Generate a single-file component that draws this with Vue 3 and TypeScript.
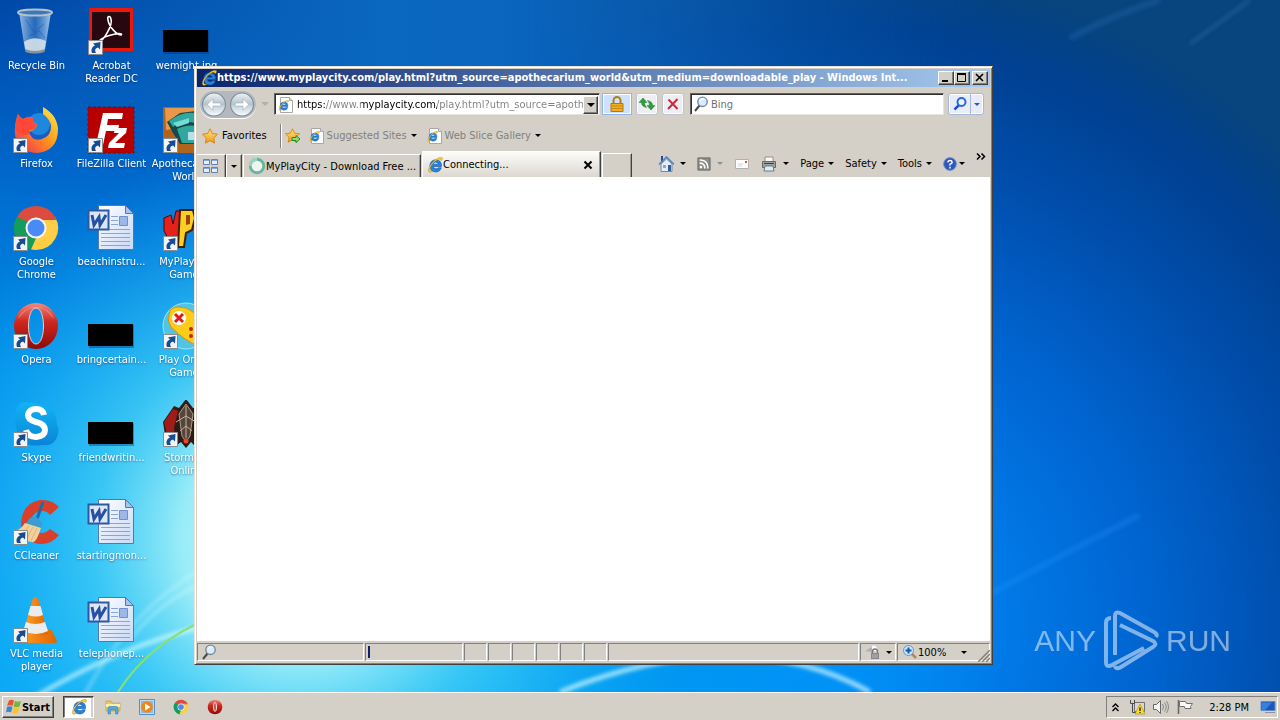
<script setup lang="ts">
import { ref } from 'vue'

interface Shortcut {
  label: string
  icon: string
  link: boolean
}

const shortcuts: Shortcut[] = [
  { label: 'Recycle Bin', icon: 'bin', link: false },
  { label: 'Firefox', icon: 'firefox', link: true },
  { label: 'Google Chrome', icon: 'chrome', link: true },
  { label: 'Opera', icon: 'opera', link: true },
  { label: 'Skype', icon: 'skype', link: true },
  { label: 'CCleaner', icon: 'ccleaner', link: true },
  { label: 'VLC media player', icon: 'vlc', link: true },
  { label: 'Acrobat Reader DC', icon: 'acrobat', link: true },
  { label: 'FileZilla Client', icon: 'filezilla', link: true },
  { label: 'beachinstru...', icon: 'word', link: false },
  { label: 'bringcertain...', icon: 'thumb', link: false },
  { label: 'friendwritin...', icon: 'thumb', link: false },
  { label: 'startingmon...', icon: 'word', link: false },
  { label: 'telephonep...', icon: 'word', link: false },
  { label: 'wemight.jpg', icon: 'thumb', link: false },
  { label: 'Apothecarium World', icon: 'apoth', link: true },
  { label: 'MyPlayCity Games', icon: 'mpc', link: true },
  { label: 'Play Online Games', icon: 'pad', link: true },
  { label: 'Stormfall Online', icon: 'storm', link: true },
]

const address = ref('https://www.myplaycity.com/play.html?utm_source=apoth')
const query = ref('')
const menus = ['Page', 'Safety', 'Tools']
const quick = [
  { name: 'Windows Explorer', icon: 'folder' },
  { name: 'Media Player', icon: 'wmp' },
  { name: 'Chrome', icon: 'chrome' },
  { name: 'Opera', icon: 'operaflat' },
]
</script>

<template>
  <svg class="defs" aria-hidden="true">
    <defs>
      <linearGradient id="gRed" x1="0" y1="0" x2="0" y2="1"><stop offset="0" stop-color="#f08a80" /><stop offset=".4" stop-color="#d0281e" /><stop offset="1" stop-color="#8c0a08" /></linearGradient>
      <linearGradient id="gGlass" x1="0" y1="0" x2="1" y2="0"><stop offset="0" stop-color="#b8d4f0" stop-opacity=".8" /><stop offset=".5" stop-color="#4a88cc" stop-opacity=".5" /><stop offset="1" stop-color="#c0dcf4" stop-opacity=".85" /></linearGradient>
      <linearGradient id="gFox" x1="1" y1="0" x2="0" y2="1"><stop offset="0" stop-color="#fff04a" /><stop offset=".45" stop-color="#ff9a1c" /><stop offset="1" stop-color="#f0205a" /></linearGradient>
      <linearGradient id="gPage" x1="0" y1="0" x2="1" y2="1"><stop offset="0" stop-color="#fff" /><stop offset="1" stop-color="#c8d8f6" /></linearGradient>
      <linearGradient id="gSky" x1="0" y1="0" x2="0" y2="1"><stop offset="0" stop-color="#12b4f4" /><stop offset="1" stop-color="#0884d8" /></linearGradient>
      <linearGradient id="gCone" x1="0" y1="0" x2="1" y2="0"><stop offset="0" stop-color="#ffa428" /><stop offset="1" stop-color="#e06400" /></linearGradient>
      <linearGradient id="gBall" x1="0" y1="0" x2="0" y2="1"><stop offset="0" stop-color="#eef2f4" /><stop offset=".5" stop-color="#b4c2cc" /><stop offset=".55" stop-color="#c4d2da" /><stop offset="1" stop-color="#f8fcfe" /></linearGradient>
      <linearGradient id="gGold" x1="0" y1="0" x2="0" y2="1"><stop offset="0" stop-color="#ffe680" /><stop offset="1" stop-color="#f09a10" /></linearGradient>
    </defs>
    <symbol id="i-arrow" viewBox="0 0 15 15">
      <path d="M.5.5h14v14H.5z" fill="#f4f4f4" stroke="#8c8c8c" />
      <path d="M4 13C2.500 9 4.500 6.500 7 5.500L5 3.500 12.500 2 12 9.500 10 7.500C7 8.500 6.500 10 8 13z" fill="#164c94" />
    </symbol>
    <symbol id="i-bin" viewBox="0 0 48 48">
      <path d="M7 4l6 38q11 4 20 0l6-38z" fill="url(#gGlass)" />
      <path d="M12 34q10-7 22-1l-1.500 9q-9 4-19 0z" fill="#dde6ea" opacity=".85" />
      <path d="M14 12l8 12 10-8M17 28l10-5 6 7" fill="none" stroke="#1c5ab0" opacity=".6" />
      <path d="M13 41q10 4 20 0l-.5 3q-10 3-19 0z" fill="#8c9298" />
      <ellipse cx="23" cy="4.500" rx="17" ry="3" fill="#3c78bc" stroke="#b8c0c8" stroke-width="2" />
    </symbol>
    <symbol id="i-firefox" viewBox="0 0 48 48">
      <circle cx="24" cy="25" r="17" fill="#1c5cc0" /><circle cx="27" cy="18" r="11" fill="#2088dc" />
      <path d="M31 1Q45 9 46 23 46 45 25 47 5 46 3 29 2 18 6 8q2 4 5 5 5-3 10-1-1 5 4 6-1 6-8 8 3 10 13 7 9-3 9-12 0-7-8-13 0-4 0-6z" fill="url(#gFox)" />
      <path d="M3 22Q4 14 6 8q2 4 5 5 5-3 10-1-1 5 4 6-1 6-8 6 2 5-4 5Q6 29 3 22z" fill="#ff4838" />
    </symbol>
    <symbol id="i-chrome" viewBox="0 0 48 48">
      <path d="M24 24L4.900 13A22 22 0 0 1 43.100 13z" fill="#db4c3e" />
      <path d="M24 13h19.100A22 22 0 0 1 24 46z" fill="#ffce44" />
      <path d="M24 24v22A22 22 0 0 1 4.900 13z" fill="#159c5a" />
      <path d="M24 13h19.100q1 1.500 1.500 3H26z" fill="#db4c3e" /><path d="M4.900 13l10 16 4-10z" fill="#159c5a" /><path d="M24 46l9.500-16.500L25 32 19 45.500z" fill="#ffce44" />
      <circle cx="24" cy="24" r="10.500" fill="#f4f4f4" /><circle cx="24" cy="24" r="8.500" fill="#4a8af4" />
    </symbol>
    <symbol id="i-opera" viewBox="0 0 48 48">
      <path fill-rule="evenodd" d="M24 1a22 23 0 0 1 0 46 22 23 0 0 1 0-46zm0 5c-10 0-10 36 0 36s10-36 0-36z" fill="url(#gRed)" />
      <path d="M24 6c-10 0-10 36 0 36s10-36 0-36z" fill="none" stroke="#f4c8c0" stroke-width="1" />
      <path d="M6 17C10 2 38 2 42 17 34 8 32 5 24 5S14 8 6 17z" fill="#fff" opacity=".25" />
    </symbol>
    <symbol id="i-operaflat" viewBox="0 0 48 48">
      <circle cx="24" cy="24" r="22" fill="url(#gRed)" /><ellipse cx="24" cy="24" rx="6" ry="14" fill="#f0dcd8" /><ellipse cx="24" cy="24" rx="2" ry="12" fill="#b01010" />
    </symbol>
    <symbol id="i-skype" viewBox="0 0 48 48">
      <path d="M3 14Q4 2 16 2q5 0 8 2 20 0 21 21 3 5 0 12-4 10-15 8-24 4-26-19-2-5-1-12z" fill="url(#gSky)" />
      <path d="M32 15Q31 9 24 9t-8 6q0 5 8 7 9 2 9 8 0 6-9 7-8 0-10-7" fill="none" stroke="#fff" stroke-width="6" />
    </symbol>
    <symbol id="i-ccleaner" viewBox="0 0 48 48">
      <path d="M47 9L38 17Q34 12 27 13 18 17 19 26q2 9 11 9 4 0 8-4l9 6Q39 47 27 46 9 43 9 24 11 5 28 2 40 1 47 9z" fill="#d8402c" />
      <path d="M31 4L25 21" stroke="#1c6ca8" stroke-width="3" />
      <path d="M15 24q3-6 9-5 5 2 6 8l-2 3-15-4z" fill="#3c9cd0" />
      <path d="M13 25l16 5Q24 46 20 44 6 43 1 33q8-1 12-8z" fill="#f0d09c" />
      <path d="M17 28L9 38M21 29l-7 13M25 30l-6 13" stroke="#dcb478" />
    </symbol>
    <symbol id="i-vlc" viewBox="0 0 48 48">
      <path d="M9 33h30l6 12-1 2H5l-1-2z" fill="url(#gCone)" />
      <path d="M21 2q3-2 5 0l10 36q-12 6-25 0z" fill="url(#gCone)" />
      <path d="M18.500 10h10l2.500 9q-7 3-15 0zM14 26q9 4 19 0l3 9q-12 6-25 0z" fill="#ececec" />
    </symbol>
    <symbol id="i-acrobat" viewBox="0 0 48 48">
      <path d="M2 0h44v43H2z" fill="#e8180c" /><path d="M5 4h38v36H5z" fill="#280810" />
      <path d="M12 33c4 1 14-16 12-22-1-4-4-3-3 1 1 7 9 15 13 15 4-3-15-1-22 6z" fill="none" stroke="#fff" stroke-width="1.600" />
    </symbol>
    <symbol id="i-filezilla" viewBox="0 0 48 48">
      <path d="M1 1h46v46H1z" fill="#b80000" /><path d="M1 1h46v46H1z" fill="none" stroke="#780818" stroke-dasharray="3 2" />
      <path d="M16 7h20l-1 6H21l-1 6h12l-1 6H19l-3 14H9zM28 22h12l-1 5-11 10h10l-1 5H21l1-5 10-10h-5z" fill="#fff" />
    </symbol>
    <symbol id="i-word" viewBox="0 0 48 48">
      <path d="M11.500 1.500h27l8 8v36h-35z" fill="url(#gPage)" stroke="#5078b4" /><path d="M38.500 1.500v8h8z" fill="#a8c4ec" stroke="#5078b4" />
      <path d="M24 12.500h7M24 16.500h7M24 20.500h7M14 25.500h29M14 29.500h29M14 33.500h29M14 37.500h29M14 41.500h29" stroke="#88a4d8" />
      <path d="M32.500 12.500h8v9h-8z" fill="#9cb8e8" stroke="#7090cc" />
      <path d="M1.500 6.500h20v19h-20z" fill="#dce8fa" stroke="#2c58a8" stroke-width="2" />
      <path d="M5 11l2 10 5-8 1 8 6-10" fill="none" stroke="#2850a0" stroke-width="3" />
    </symbol>
    <symbol id="i-thumb" viewBox="0 0 48 48"><path d="M2 23h45v23H2z" fill="#02306c" opacity=".4" /><path d="M1 22h45v22H1z" /></symbol>
    <symbol id="i-apoth" viewBox="0 0 48 48">
      <path d="M1 1h46v46H1z" fill="#b0641c" /><path d="M3 2h42v10L28 20 4 24z" fill="#e89848" />
      <path d="M5 16l13-9 16-2 8 8v25H18L11 27z" fill="#184848" /><path d="M7 15q13-10 26-8v10Q20 14 11 21zM15 23q11-6 26-2v16H20z" fill="#30a8a0" />
      <path d="M11 17l16-5v5l-12 4z" fill="#74dcd0" /><path d="M26 26h10v8H26z" fill="#b8e0e8" />
    </symbol>
    <symbol id="i-mpc" viewBox="0 0 48 48">
      <path d="M2 14l7-3 2 9 3-13h7l-4 25-7 9-8-14z" fill="#e8201c" stroke="#480808" />
      <path d="M18 6h13l2 8-3 12-6 3-2 14h-6z" fill="#fcd020" stroke="#402008" stroke-width="2" /><path d="M24 11h4v9l-4 1z" fill="#a04010" />
      <path d="M34 8h13v30H34z" fill="#f0b820" />
    </symbol>
    <symbol id="i-pad" viewBox="0 0 48 48">
      <circle cx="24" cy="24" r="23" fill="#50c4e4" stroke="#98e8f4" />
      <path d="M7 13Q8 4 17 5q8 0 14 5l14 17-8 17Q24 40 9 25 5 19 7 13z" fill="#fccc18" stroke="#e08c10" />
      <circle cx="17" cy="16" r="7" fill="#fff" /><path d="M13 12l8 8m0-8l-8 8" stroke="#d82018" stroke-width="3" /><circle cx="29" cy="27" r="2" fill="#c02810" /><circle cx="29" cy="34" r="2" fill="#c02810" />
    </symbol>
    <symbol id="i-storm" viewBox="0 0 48 48">
      <path d="M1 22L12 6l5 2 7-9 7 9 12-1v30l-7 2-4 6-3-3-5 6-5-6-4 3-4-6-8-4z" fill="#2c1c18" /><path d="M2 22l9-13 5 2-4 17 1 10-8-4z" fill="#a01c18" />
      <path d="M17 14l7-10 7 10-3 22-4 6-4-6z" fill="#54443c" stroke="#b09c84" /><path d="M14 22l10-6 10 6M18 31l6-5 6 5M24 6v32" stroke="#c8b098" fill="none" /><circle cx="24" cy="41" r="2.500" fill="#f84020" />
    </symbol>
    <symbol id="i-ie" viewBox="0 0 16 16">
      <path d="M14.500 9.500H6.200q.3 2.300 2.800 2.300 1.600 0 2.300-1.100h3Q13 15 8.700 15 3 14.500 2.800 8.900 3.200 3 8.700 2.800 14.900 3 14.500 9.500zM6.200 7.200h5.100Q11 5.200 8.700 5.200 6.400 5.300 6.200 7.200z" fill="#2484dc" stroke="#0c58b0" stroke-width=".6" />
      <path d="M15.600.8Q13-1 7.500 3.500 1 9.500 1.300 13.800 2 17 6.500 13.800 2.500 15 2.800 12 4 7.500 8.500 4 13.500.5 14 3.800 15.800 3 15.600.8z" fill="#f8c830" stroke="#b07c10" stroke-width=".3" />
    </symbol>
    <symbol id="i-iepage" viewBox="0 0 16 16">
      <path d="M3.500.5h9l3 3v12h-12z" fill="#fff" stroke="#a8a8a8" /><path d="M12.500.5v3h3" fill="#ddd" stroke="#a8a8a8" /><use href="#i-ie" x="1" y="3" width="11" height="11" />
    </symbol>
    <symbol id="i-star" viewBox="0 0 16 16"><path d="M8 .8l2.300 4.700 5.200.7-3.800 3.700.9 5.300L8 12.700l-4.600 2.500.9-5.300L.5 6.200l5.200-.7z" fill="url(#gGold)" stroke="#d08a18" /></symbol>
    <symbol id="i-addstar" viewBox="0 0 16 16"><use href="#i-star" width="15" height="15" /><path d="M7 9.500h4V7.500l4 3.500-4 3.500v-2H7z" fill="#90e070" stroke="#208820" /></symbol>
    <symbol id="i-lens" viewBox="0 0 16 16"><path d="M6.500 9.500L2 15" stroke="#484848" stroke-width="2" /><circle cx="9.500" cy="5.800" r="4.700" fill="#d8ecfc" stroke="#788898" stroke-width="1.400" /><path d="M7 5q1-2.500 4-2.300" stroke="#fff" fill="none" /></symbol>
    <symbol id="i-go" viewBox="0 0 16 16"><path d="M7 9l-4.500 4.500" stroke="#1c50d0" stroke-width="2.600" /><circle cx="9.500" cy="6" r="4" fill="#e8f4ff" stroke="#2c68e0" stroke-width="2" /></symbol>
    <symbol id="i-lock" viewBox="0 0 16 16"><path d="M4.500 8V4.500a3.500 3.500 0 0 1 7 0V8" fill="none" stroke="#b08018" stroke-width="2" /><path d="M2 7.500h12v8H2z" fill="#f0b020" stroke="#b87408" /><path d="M2.500 10h11M2.500 12.500h11" stroke="#c88810" /></symbol>
    <symbol id="i-refresh" viewBox="0 0 16 16"><path d="M0 6.500L4 2l4 4.500H5.500q0 3 2 5Q2.500 10.500 2.500 6.500zM16 9.500L12 14 8 9.500h2.500q0-3-2-5 5 1 5 5z" fill="#2ca038" stroke="#187824" stroke-width=".5" /></symbol>
    <symbol id="i-stop" viewBox="0 0 16 16"><path d="M3.500 3.500l9 9.500M12.500 3L3 13" stroke="#d0283c" stroke-width="2" /></symbol>
    <symbol id="i-grid" viewBox="0 0 16 16"><path d="M.5 1.500h6v5h-6zM8.500 1.500h6v5h-6zM.5 9.500h6v5h-6zM8.500 9.500h6v5h-6z" fill="#e4eefc" stroke="#6480ac" /><path d="M1 2.500h5M9 2.500h5M1 10.500h5M9 10.500h5" stroke="#88a8d8" /></symbol>
    <symbol id="i-ring" viewBox="0 0 16 16"><circle cx="8" cy="8" r="6" fill="#f0f4f0" stroke="#68b4a0" stroke-width="2.500" /><path d="M2 8a6 6 0 0 1 6-6" fill="none" stroke="#98d4c0" stroke-width="2.500" /></symbol>
    <symbol id="i-home" viewBox="0 0 16 16"><path d="M3 8v7.500h11V8L8.500 3z" fill="#e4ecf8" stroke="#7488a8" /><path d="M3 0h2v6H3z" fill="#2848a0" /><path d="M1 8.500L8.500 1 16 8.500" fill="none" stroke="#5c84b8" stroke-width="1.600" /><path d="M5 9h3v3H5z" fill="#88a8d8" /><path d="M10 9h3v6h-3z" fill="#305c98" /></symbol>
    <symbol id="i-rss" viewBox="0 0 16 16"><path d="M1 1h14v14H1z" fill="#8c8c88" stroke="#686864" /><circle cx="4.500" cy="11.500" r="1.500" fill="#fff" /><path d="M3 7q6 0 6 6M3 3.500q9.500 0 9.500 9.500" stroke="#fff" stroke-width="1.800" fill="none" /></symbol>
    <symbol id="i-mail" viewBox="0 0 16 16"><path d="M1.500 3.500h13v9h-13z" fill="#fcfcfc" stroke="#b0b0b0" /><path d="M11 5h2v2h-2z" fill="#e05048" /><path d="M4 8h5M4 10h4" stroke="#d0d0d0" /></symbol>
    <symbol id="i-print" viewBox="0 0 16 16"><path d="M4 1h8v5H4z" fill="#f8f8f8" stroke="#909090" /><path d="M1.500 5.500h13v6h-13z" fill="#a0a0a0" stroke="#686868" /><path d="M3 7.500h10" stroke="#404040" /><path d="M4 10h8l1 5H3z" fill="#d8f0fc" stroke="#707880" /></symbol>
    <symbol id="i-help" viewBox="0 0 16 16"><circle cx="8" cy="8" r="7.300" fill="#3058bc" stroke="#7890c8" /><path d="M5.500 6.200Q5.700 4 8 4t2.500 2Q10.500 7.500 8 8.300v1.500M8 11v2" stroke="#fff" stroke-width="1.700" fill="none" /></symbol>
    <symbol id="i-safe" viewBox="0 0 16 16"><path d="M1 8Q6 2 10 4l-2 2q2 2 1 4Q6 6 1 8z" fill="#b0b0b0" /><path d="M8 2q5-1 6 5H8z" fill="#fff" /><path d="M8.500 9V7.500a2.500 2.500 0 0 1 5 0V9" stroke="#787878" stroke-width="1.400" fill="none" /><path d="M7 9h8v6H7z" fill="#888" /><path d="M8 11h6M8 13h6" stroke="#b8b8b8" /></symbol>
    <symbol id="i-zoomin" viewBox="0 0 16 16"><path d="M9 9l5 5" stroke="#b08858" stroke-width="2.500" /><circle cx="6.500" cy="6.500" r="5" fill="#c8e8fc" stroke="#6c94b8" /><path d="M3.500 6.500h6M6.500 3.500v6" stroke="#1854b4" stroke-width="2" /></symbol>
    <symbol id="i-flag" viewBox="0 0 16 16">
      <path d="M3 1.500Q6 0 8 1.500L6.500 7Q4 5.500 1 7z" fill="#e8542c" /><path d="M9 2q3 1.500 6 0L13.500 7.500q-3 1.500-6 0z" fill="#70b840" /><path d="M1 8q3-1.500 5.500 0L5 13.500q-2.500-1.500-5 0z" fill="#3c84d8" /><path d="M7.500 8.500q3 1.500 6 0L12 14q-3 1.500-6 0z" fill="#fcc428" />
    </symbol>
    <symbol id="i-folder" viewBox="0 0 16 16"><path d="M1 2h5l1 2h8v8H1z" fill="#e8c860" stroke="#b89840" stroke-width=".6" /><path d="M1 5h14v3H1z" fill="#fcf0a8" /><path d="M3 15V9q0-1.500 2-1.500h6q2 0 2 1.500v6h-2.500v-4h-5v4z" fill="#58a8dc" stroke="#3880b8" stroke-width=".6" /></symbol>
    <symbol id="i-wmp" viewBox="0 0 16 16"><path d="M.5.5h15v15H.5z" fill="#bcdcf4" stroke="#5490c8" /><path d="M2 2h12v12H2z" fill="#88bce8" /><circle cx="8" cy="8" r="5.800" fill="#f08418" /><path d="M6 4.500L11.500 8 6 11.500z" fill="#fff" /></symbol>
    <symbol id="i-net" viewBox="0 0 16 16"><path d="M5.500 3.500h10v9h-10z" fill="#d8d8d8" stroke="#707070" /><path d="M1.500 1v3.500h4V1M3.500 4.500v9h4" fill="none" stroke="#484848" /><path d="M11 5l5 10H6z" fill="#fce020" stroke="#a88800" stroke-width=".6" /><path d="M11 8.500v3.500M11 13v1" stroke="#000" stroke-width="1.200" /></symbol>
    <symbol id="i-sound" viewBox="0 0 16 16"><path d="M.5 5.500h3l4-4v13l-4-4h-3z" fill="#f4f4f4" stroke="#686868" /><path d="M9.500 5q2 3 0 6M11.500 3.500q3.500 4.500 0 9M13.500 2q4 6 0 12" fill="none" stroke="#888" /></symbol>
    <symbol id="i-action" viewBox="0 0 16 16"><path d="M1.500 1v14" stroke="#686868" stroke-width="1.600" /><path d="M2.500 2.500h6l1 2h6l-2 3 .5 2h-6l-.5-2h-5z" fill="#f8f8f8" stroke="#707070" /></symbol>
    <symbol id="i-desk" viewBox="0 0 16 16"><path d="M1 2.500h14v9H1z" fill="#1c58b8" stroke="#5c8cd0" /><path d="M2 3.500h10L5 11H2z" fill="#3880d8" /><path d="M5 13.500h10" stroke="#909498" /></symbol>
  </svg>

  <div class="screen">
    <main class="desktop">
      <svg class="wallpaper" viewBox="0 0 1280 692" preserveAspectRatio="none" aria-hidden="true">
        <defs>
          <linearGradient id="wBase" x1="0" y1="0" x2="0" y2="1"><stop offset="0" stop-color="#0048a8" /><stop offset=".25" stop-color="#0068cc" /><stop offset=".55" stop-color="#0092ec" /><stop offset="1" stop-color="#00a4f6" /></linearGradient>
          <linearGradient id="wTop" x1="0" y1="0" x2="1" y2="0"><stop offset="0" stop-color="#0a68c0" stop-opacity="0" /><stop offset=".3" stop-color="#0a68c0" /><stop offset=".55" stop-color="#0a62bc" /><stop offset=".85" stop-color="#004a9c" /></linearGradient>
          <radialGradient id="wRight" gradientUnits="userSpaceOnUse" cx="820" cy="620" r="660"><stop offset="0" stop-color="#0090fc" /><stop offset=".28" stop-color="#007ae8" /><stop offset=".5" stop-color="#0064d0" /><stop offset=".72" stop-color="#004eac" /><stop offset=".9" stop-color="#004090" /><stop offset="1" stop-color="#08447e" /></radialGradient>
          <linearGradient id="wFade" x1="0" y1="0" x2="1" y2="0"><stop offset=".4" stop-color="#000" /><stop offset=".78" stop-color="#fff" /></linearGradient>
          <mask id="wMask"><path d="M0 0h1280v692H0z" fill="url(#wFade)" /></mask>
          <radialGradient id="wGlow" gradientUnits="userSpaceOnUse" cx="300" cy="540" r="400"><stop offset="0" stop-color="#dcfffa" /><stop offset=".3" stop-color="#98ecf8" /><stop offset=".52" stop-color="#44d0f6" stop-opacity=".8" /><stop offset="1" stop-color="#10a8f4" stop-opacity="0" /></radialGradient>
          <filter id="soft"><feGaussianBlur stdDeviation="2" /></filter>
        </defs>
        <path d="M0 0h1280v692H0z" fill="url(#wBase)" />
        <path d="M0 0h1280v120H0z" fill="url(#wTop)" />
        <path d="M0 0h1280v692H0z" fill="url(#wRight)" mask="url(#wMask)" />
        <path d="M0 0h1280v692H0z" fill="url(#wGlow)" />
        <g fill="none" filter="url(#soft)">
          <path d="M1190 44L1250 0" stroke="#5090d0" stroke-width="2" opacity=".5" />
          <path d="M1070 38Q1110 16 1160 0" stroke="#3078c0" stroke-width="6" opacity=".3" />
          <path d="M990 594Q1080 545 1140 515" stroke="#2898ff" stroke-width="5" opacity=".3" />
          <path d="M30 700Q120 645 210 625" stroke="#dcffff" stroke-width="4" opacity=".75" />
          <path d="M85 694Q130 610 200 570M130 640Q160 600 210 580" stroke="#dcffff" stroke-width="2" opacity=".6" />
          <path d="M560 692Q740 620 870 692" stroke="#d4faff" stroke-width="4" opacity=".9" />
        </g>
        <path d="M118 692Q150 642 210 618" stroke="#88e070" stroke-width="2" fill="none" />
      </svg>

      <nav class="icons" aria-label="Desktop">
        <a v-for="s in shortcuts" :key="s.label" class="shortcut" href="#">
          <span class="pic">
            <svg class="big"><use :href="'#i-' + s.icon" /></svg>
            <svg v-if="s.link" class="badge"><use href="#i-arrow" /></svg>
          </span>
          <span class="name">{{ s.label }}</span>
        </a>
      </nav>

      <div class="mark" aria-label="ANY RUN">
        <span>ANY</span>
        <svg viewBox="0 0 56 62" class="mark-logo">
          <path d="M8 8q-5 0-5 5v39q0 6 6 3l32-17M12 45V6q0-5 5-3l34 19q4 2 2 5M17 15l33 16q5 3 0 6L18 57q-5 3-6-1" fill="none" stroke="currentColor" stroke-width="4" />
        </svg>
        <span>RUN</span>
      </div>

      <section class="window">
        <header class="title">
          <svg class="i16"><use href="#i-ie" /></svg>
          <h1>https://www.myplaycity.com/play.html?utm_source=apothecarium_world&amp;utm_medium=downloadable_play - Windows Int...</h1>
          <div class="controls">
            <button class="ctl" aria-label="Minimize"><svg viewBox="0 0 12 10"><path d="M2 8h6" stroke="#000" stroke-width="2" /></svg></button>
            <button class="ctl" aria-label="Maximize"><svg viewBox="0 0 12 10"><path d="M1.500 1v7.500h8V1" fill="none" stroke="#000" /><path d="M1 1h9" stroke="#000" stroke-width="2" /></svg></button>
            <button class="ctl close" aria-label="Close"><svg viewBox="0 0 12 10"><path d="M2 1l7 7M9 1L2 8" stroke="#000" stroke-width="1.600" /></svg></button>
          </div>
        </header>

        <div class="navbar">
          <div class="pill">
            <button class="ball" aria-label="Back"><svg viewBox="0 0 24 24"><circle cx="12" cy="12" r="11" fill="url(#gBall)" stroke="#788c9c" /><path d="M11 6.500L5.500 12l5.500 5.500v-4h7.500v-3H11z" fill="#fff" stroke="#a0acb4" stroke-width=".6" /></svg></button>
            <button class="ball" aria-label="Forward"><svg viewBox="0 0 24 24"><circle cx="12" cy="12" r="11" fill="url(#gBall)" stroke="#788c9c" /><path d="M13 6.500l5.500 5.500-5.500 5.500v-4H5.500v-3H13z" fill="#fff" stroke="#a0acb4" stroke-width=".6" /></svg></button>
          </div>
          <button class="drop pale" aria-label="Recent pages"><i class="tri" /></button>
          <div class="address">
            <svg class="i16"><use href="#i-iepage" /></svg>
            <input v-model="address" type="text" aria-label="Address">
            <button class="combo" aria-label="Show address history"><i class="tri wide" /></button>
          </div>
          <button class="tool lock" aria-label="Security report"><svg class="i16"><use href="#i-lock" /></svg></button>
          <button class="tool" aria-label="Refresh"><svg class="i16"><use href="#i-refresh" /></svg></button>
          <button class="tool" aria-label="Stop"><svg class="i16"><use href="#i-stop" /></svg></button>
          <div class="search">
            <svg class="i16"><use href="#i-lens" /></svg>
            <input v-model="query" type="text" placeholder="Bing" aria-label="Search">
          </div>
          <div class="split">
            <button aria-label="Search"><svg class="i16"><use href="#i-go" /></svg></button>
            <button class="narrow" aria-label="Search options"><i class="tri" /></button>
          </div>
        </div>

        <div class="favbar">
          <button class="flat fav"><svg class="i16"><use href="#i-star" /></svg>Favorites</button>
          <button class="flat add" aria-label="Add to favorites"><svg class="i16"><use href="#i-addstar" /></svg></button>
          <button class="flat grey"><svg class="i16"><use href="#i-iepage" /></svg>Suggested Sites<i class="tri" /></button>
          <button class="flat grey"><svg class="i16"><use href="#i-iepage" /></svg>Web Slice Gallery<i class="tri" /></button>
        </div>

        <div class="tabbar">
          <button class="tabcell quick" aria-label="Quick tabs"><svg class="i16"><use href="#i-grid" /></svg></button>
          <button class="tabcell list" aria-label="Tab list"><i class="tri" /></button>
          <button class="tabcell tab"><svg class="i18"><use href="#i-ring" /></svg><span>MyPlayCity - Download Free ...</span></button>
          <div class="tabcell tab active">
            <svg class="i16"><use href="#i-ie" /></svg><span>Connecting...</span>
            <button class="tabclose" aria-label="Close tab"><svg viewBox="0 0 10 10"><path d="M1.500 1.500l7 7M8.500 1.500l-7 7" stroke="#000" stroke-width="2" /></svg></button>
          </div>
          <button class="tabcell blank" aria-label="New tab" />
          <div class="commands">
            <button class="flat" aria-label="Home"><svg class="i16"><use href="#i-home" /></svg><i class="tri" /></button>
            <button class="flat" aria-label="Feeds"><svg class="i14"><use href="#i-rss" /></svg><i class="tri dim" /></button>
            <button class="flat" aria-label="Read mail"><svg class="i16"><use href="#i-mail" /></svg></button>
            <button class="flat" aria-label="Print"><svg class="i16"><use href="#i-print" /></svg><i class="tri" /></button>
            <button v-for="m in menus" :key="m" class="flat menu">{{ m }}<i class="tri" /></button>
            <button class="flat help" aria-label="Help"><svg class="i14"><use href="#i-help" /></svg><i class="tri" /></button>
            <button class="flat more" aria-label="More commands"><svg viewBox="0 0 10 7"><path d="M1 .5l3 3-3 3M5.500.5l3 3-3 3" fill="none" stroke="#000" stroke-width="1.500" /></svg></button>
          </div>
        </div>

        <div class="page" />

        <footer class="status">
          <div class="pane first"><svg class="i16"><use href="#i-lens" /></svg></div>
          <div class="pane progress"><i /></div>
          <div v-for="n in 6" :key="n" class="pane small" />
          <div class="pane grow" />
          <button class="pane safe" aria-label="Protected mode"><svg class="i16"><use href="#i-safe" /></svg><i class="tri" /></button>
          <button class="pane zoom"><svg class="i16"><use href="#i-zoomin" /></svg><span>100%</span><i class="tri" /></button>
          <svg class="grip" viewBox="0 0 12 12"><path d="M0 12L12 0M4 12l8-8M8 12l4-4" stroke="#84807a" stroke-width="1.500" /></svg>
        </footer>
      </section>
    </main>

    <footer class="taskbar">
      <button class="start"><svg class="i16"><use href="#i-flag" /></svg>Start</button>
      <button class="task" aria-label="Internet Explorer"><svg class="i16"><use href="#i-ie" /></svg></button>
      <div class="launch">
        <button v-for="q in quick" :key="q.name" :aria-label="q.name"><svg class="i16"><use :href="'#i-' + q.icon" /></svg></button>
      </div>
      <div class="tray">
        <button class="chev" aria-label="Show hidden icons"><svg viewBox="0 0 7 9"><path d="M.5 4l3-3 3 3M.5 8l3-3 3 3" fill="none" stroke="#000" stroke-width="1.400" /></svg></button>
        <svg class="i16"><use href="#i-net" /></svg>
        <svg class="i16"><use href="#i-sound" /></svg>
        <svg class="i16"><use href="#i-action" /></svg>
        <time>2:28 PM</time>
        <svg class="i16"><use href="#i-desk" /></svg>
      </div>
    </footer>
  </div>
</template>

<style>
body { overflow: hidden; }
</style>

<style scoped>
* { box-sizing: border-box; }
.defs { position: absolute; width: 0; height: 0; }
.screen {
  display: flex; flex-direction: column; height: 100vh; overflow: hidden;
  font: 11px/13px "DejaVu Sans Condensed", "DejaVu Sans", sans-serif; color: #000;
}
button, input { font: inherit; color: inherit; border: 0; margin: 0; padding: 0; background: none; }
button { display: flex; align-items: center; justify-content: center; }
svg { display: block; flex: none; }
.i14 { width: 14px; height: 14px; }
.i16 { width: 16px; height: 16px; }
.i18 { width: 18px; height: 18px; }
.tri { flex: none; border: 3px solid transparent; border-top-color: #000; border-bottom: 0; }
.tri.wide { border-width: 4px 4px 0; }
.tri.dim { border-top-color: #909090; }

.desktop { position: relative; flex: 1; min-height: 0; overflow: hidden; background: #0078dc; }
.wallpaper { position: absolute; inset: 0; width: 100%; height: 100%; }
.icons {
  position: relative; display: grid; grid-auto-flow: column; width: max-content;
  grid-template-rows: repeat(7, 98px); grid-auto-columns: 73px; column-gap: 2px;
}
.shortcut { display: flex; flex-direction: column; align-items: center; gap: 3px; padding-top: 8px; color: #fff; text-decoration: none; }
.pic { position: relative; padding-right: 2px; }
.big { width: 48px; height: 48px; }
.badge { position: absolute; left: 1px; bottom: 1px; width: 15px; height: 15px; }
.name { text-align: center; max-width: 73px; text-shadow: 0 1px 2px rgba(0, 40, 100, .6); }

.mark {
  position: absolute; right: 49px; bottom: 20px; display: flex; align-items: center; gap: 7px;
  color: #fff; opacity: .5; font: 30px/62px "Liberation Sans Narrow", "Liberation Sans", sans-serif;
}
.mark-logo { width: 56px; height: 62px; }

.window {
  position: absolute; inset: 66px 287px 27px 194px; display: flex; flex-direction: column;
  padding: 2px; background: #d4d0c8; border: 1px solid; border-color: #e8e4dc #404040 #404040 #e8e4dc;
  box-shadow: inset 1px 1px #fff, inset -1px -1px #808080;
}
.title { display: flex; align-items: center; height: 18px; padding: 0 2px 0 4px; background: linear-gradient(90deg, #0a246a, #a6caf0); color: #fff; }
.title h1 { flex: 1; margin: 0; font-size: 11px; line-height: 16px; font-weight: bold; white-space: nowrap; }
.controls { display: flex; padding-left: 3px; }
.ctl { width: 16px; height: 14px; background: #d4d0c8; border: 1px solid; border-color: #fff #404040 #404040 #fff; box-shadow: inset -1px -1px #808080; }
.ctl svg { width: 12px; height: 10px; }
.close { margin-left: 2px; }

.navbar { display: flex; align-items: center; height: 34px; padding: 0 6px 0 3px; }
.pill { display: flex; gap: 2px; padding: 1px; border-radius: 14px; background: #b4b8bc; box-shadow: 0 1px #fff; }
.ball { width: 26px; height: 25px; }
.ball svg { width: 26px; height: 25px; }
.drop { width: 18px; height: 22px; }
.pale .tri { border-width: 4px 4px 0; border-top-color: #b4b0a8; }
.address, .search { display: flex; align-items: center; height: 22px; background: #fff; border: 1px solid; border-color: #606060 #e8e4dc #e8e4dc #606060; box-shadow: inset 1px 1px #303030; }
.address { width: 326px; padding: 2px 1px 1px 2px; }
.address input {
  flex: 1; min-width: 0; height: 18px; margin-left: 4px; outline: 0; -webkit-text-fill-color: transparent;
  background: linear-gradient(90deg, #000 29px, #808080 29px 64px, #000 64px 140px, #808080 140px);
  -webkit-background-clip: text; background-clip: text;
}
.combo { width: 15px; height: 18px; background: #d4d0c8; border: 1px solid; border-color: #fff #404040 #404040 #fff; box-shadow: inset -1px -1px #808080; }
.tool { width: 22px; height: 22px; margin-left: 4px; background: #eceef2; border: 1px solid #c0c4d0; border-radius: 3px; box-shadow: inset 0 0 0 1px #fff; }
.tool.lock { width: 30px; margin-left: 2px; background: #cfe2fb; border-color: #90b4ec; border-radius: 0; }
.search { flex: 1; min-width: 0; margin: 0 4px 0 6px; padding: 1px 2px; }
.search input { flex: 1; min-width: 0; margin-left: 2px; outline: 0; }
.search input::placeholder { color: #707070; opacity: 1; }
.split { display: flex; height: 22px; background: #e8ecf8; border: 1px solid #a8b8dc; border-radius: 3px; box-shadow: inset 0 0 0 1px #fff; }
.split button { width: 21px; }
.split .narrow { width: 13px; border-left: 1px solid #a8b8dc; }
.split .tri { border-top-color: #2458c8; }

.favbar { display: flex; align-items: center; height: 29px; padding-left: 5px; }
.flat { gap: 4px; white-space: nowrap; }
.fav { padding-right: 13px; }
.add { height: 24px; padding: 0 7px 0 4px; border-left: 1px solid #808080; box-shadow: inset 1px 0 #fff; }
.grey { color: #808080; gap: 3px; margin-right: 9px; }
.grey .tri { margin-left: 1px; }

.tabbar { display: flex; align-items: flex-end; height: 27px; }
.tabcell { height: 23px; flex: none; border-top: 1px solid #fff; border-right: 1px solid #404040; box-shadow: inset -1px 0 #a09c94; }
.quick { width: 29px; }
.list { width: 16px; border-left: 1px solid #fff; }
.tab { display: flex; align-items: center; justify-content: flex-start; width: 178px; padding-left: 4px; margin-left: 1px; border-left: 1px solid #fff; white-space: nowrap; }
.tab.active { height: 26px; width: 179px; background: linear-gradient(#fcfcfa, #dcd8d0); }
.tabclose { width: 12px; height: 12px; margin: 0 6px 0 auto; }
.tabclose svg { width: 10px; height: 10px; }
.blank { width: 30px; height: 24px; margin-left: 1px; border-left: 1px solid #fff; }
.commands { flex: 1; display: flex; align-items: center; justify-content: flex-end; align-self: stretch; gap: 11px; padding-right: 4px; }
.commands .flat { height: 26px; gap: 6px; }
.commands .menu { gap: 4px; }
.commands .help { gap: 2px; }
.commands .more { align-self: flex-start; height: 13px; }
.more svg { width: 10px; height: 7px; }

.page { flex: 1; min-height: 0; background: #fff; }

.status { position: relative; display: flex; gap: 1px; height: 21px; padding: 2px 0 1px; }
.pane { display: flex; align-items: center; flex: none; height: 18px; border: 1px solid; border-color: #808080 #fff #fff #808080; padding: 0 3px; }
.first { width: 167px; }
.progress { width: 98px; padding-left: 2px; }
.progress i { width: 2px; height: 12px; background: #0a246a; }
.small { width: 23px; }
.grow { flex: 1; }
.safe { width: 36px; justify-content: space-between; }
.zoom { width: 93px; padding-left: 4px; justify-content: flex-start; }
.zoom .tri { margin-left: 15px; }
.grip { position: absolute; right: 0; bottom: 0; width: 12px; height: 12px; }

.taskbar { display: flex; align-items: center; flex: none; height: 28px; padding: 1px 2px 0; background: #d4d0c8; border-top: 1px solid #fff; }
.start { width: 52px; height: 22px; font-weight: bold; border: 1px solid; border-color: #fff #404040 #404040 #fff; box-shadow: inset -1px -1px #808080; }
.task { width: 31px; height: 22px; margin-left: 9px; background: #fff; border: 1px solid; border-color: #404040 #fff #fff #404040; box-shadow: inset 1px 1px #808080, inset -2px 0 #d4d0c8; }
.launch { display: flex; gap: 18px; padding-left: 11px; }
.tray { display: flex; align-items: center; gap: 8px; height: 22px; margin-left: auto; padding: 0 1px 0 5px; border: 1px solid; border-color: #808080 #fff #fff #808080; }
.chev svg { width: 7px; height: 9px; margin-right: 2px; }
.tray time { margin: 0 3px 0 8px; }
</style>
